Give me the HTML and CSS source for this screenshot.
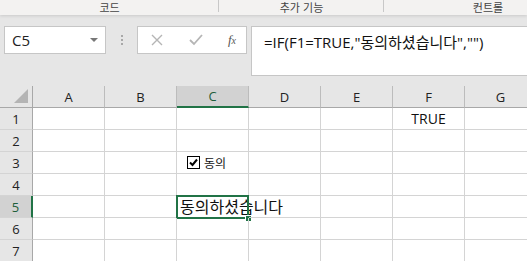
FILE: index.html
```html
<!DOCTYPE html>
<html lang="ko">
<head>
    <meta charset="UTF-8">
    <title>Excel - 동의 체크박스</title>
    <link rel="stylesheet" href="styles.css">
</head>
<body>

<div id="app">
    <!-- Ribbon group labels -->
    <div class="ribbon">
        <div class="ribbon-group g1">코드</div>
        <div class="ribbon-group g2">추가 기능</div>
        <div class="ribbon-group g3">컨트롤</div>
    </div>

    <!-- Formula bar -->
    <div class="formula-bar">
        <div class="name-box">
            <span>C5</span>
            <span class="caret"></span>
        </div>
        <div class="grip"><i></i><i></i><i></i></div>
        <div class="fx-buttons">
            <svg width="14" height="14" viewBox="0 0 14 14"><path d="M2 2 L12 12 M12 2 L2 12" stroke="#b5b5b5" stroke-width="1.4" fill="none"/></svg>
            <svg width="16" height="14" viewBox="0 0 16 14"><path d="M2 7 L6 11 L14 2" stroke="#b5b5b5" stroke-width="1.8" fill="none"/></svg>
            <span class="fx">f<sub>x</sub></span>
        </div>
        <div class="formula-input">=IF(F1=TRUE,"동의하셨습니다","")</div>
    </div>

    <!-- Sheet -->
    <div class="sheet">
        <div class="hd corner"><span class="tri"></span></div>
        <div class="hd col">A</div>
        <div class="hd col">B</div>
        <div class="hd col active">C</div>
        <div class="hd col">D</div>
        <div class="hd col">E</div>
        <div class="hd col">F</div>
        <div class="hd col">G</div>

        <div class="hd row">1</div>
        <div class="cell"></div><div class="cell"></div><div class="cell"></div><div class="cell"></div><div class="cell"></div>
        <div class="cell bool">TRUE</div><div class="cell"></div>

        <div class="hd row">2</div>
        <div class="cell"></div><div class="cell"></div><div class="cell"></div><div class="cell"></div><div class="cell"></div><div class="cell"></div><div class="cell"></div>

        <div class="hd row">3</div>
        <div class="cell"></div><div class="cell"></div>
        <div class="cell">
            <label class="check">
                <span class="box">
                    <svg width="9" height="9" viewBox="0 0 9 9"><path d="M1 4.5 L3.5 7 L8 1.5" stroke="#000" stroke-width="2" fill="none"/></svg>
                </span>
                동의
            </label>
        </div>
        <div class="cell"></div><div class="cell"></div><div class="cell"></div><div class="cell"></div>

        <div class="hd row">4</div>
        <div class="cell"></div><div class="cell"></div><div class="cell"></div><div class="cell"></div><div class="cell"></div><div class="cell"></div><div class="cell"></div>

        <div class="hd row active">5</div>
        <div class="cell"></div><div class="cell"></div>
        <div class="cell selected">
            <span class="text">동의하셨습니다</span>
            <span class="sel"><span class="handle"></span></span>
        </div>
        <div class="cell"></div><div class="cell"></div><div class="cell"></div><div class="cell"></div>

        <div class="hd row">6</div>
        <div class="cell"></div><div class="cell"></div><div class="cell"></div><div class="cell"></div><div class="cell"></div><div class="cell"></div><div class="cell"></div>

        <div class="hd row">7</div>
        <div class="cell"></div><div class="cell"></div><div class="cell"></div><div class="cell"></div><div class="cell"></div><div class="cell"></div><div class="cell"></div>
    </div>
</div>

</body>
</html>
```

FILE: styles.css
```css
body {
    margin: 0;
    background: #ffffff;
    font-family: 'Open Sans', 'Noto Sans CJK KR', sans-serif;
    overflow: hidden;
}

#app {
    width: 527px;
    height: 261px;
    overflow: hidden;
    background: #e6e6e6;
}

/* Ribbon labels */
.ribbon {
    display: flex;
    height: 15px;
    background: #f3f2f1;
    box-shadow: 0 1px 3px rgba(0, 0, 0, 0.12);
    position: relative;
}

.ribbon-group {
    flex: none;
    position: relative;
    font-family: 'Noto Sans CJK KR', sans-serif;
    font-size: 11px;
    line-height: 14px;
    color: #444;
    text-align: center;
}

.ribbon-group::after {
    content: '';
    position: absolute;
    right: 0;
    top: 0;
    height: 12px;
    border-right: 1px solid #c8c8c8;
}

.g1 { width: 219px; }
.g2 { width: 165px; }
.g3 { width: 208px; }
.g3::after { display: none; }

/* Formula bar */
.formula-bar {
    display: flex;
    align-items: flex-start;
    height: 71px;
    padding: 11px 0 0 4px;
    box-sizing: border-box;
}

.name-box {
    width: 102px;
    height: 28px;
    box-sizing: border-box;
    background: #fff;
    border: 1px solid #c6c6c6;
    display: flex;
    align-items: center;
    justify-content: space-between;
    padding: 0 7px 0 7px;
    font-size: 15px;
    color: #222;
}

.caret {
    width: 0;
    height: 0;
    border-left: 4px solid transparent;
    border-right: 4px solid transparent;
    border-top: 4px solid #777;
}

.grip {
    width: 31px;
    height: 28px;
    display: flex;
    flex-direction: column;
    align-items: center;
    justify-content: center;
    gap: 2px;
}

.grip i {
    width: 2px;
    height: 2px;
    background: #a8a8a8;
}

.fx-buttons {
    width: 110px;
    height: 28px;
    box-sizing: border-box;
    background: #fff;
    border: 1px solid #c6c6c6;
    display: flex;
    align-items: center;
    justify-content: space-between;
    padding: 0 10px 0 12px;
}

.fx {
    font-family: 'Liberation Serif', serif;
    font-style: italic;
    font-size: 13px;
    color: #555;
}

.fx sub {
    font-size: 10px;
    vertical-align: baseline;
}

.formula-input {
    flex: 1;
    margin-left: 4px;
    height: 50px;
    box-sizing: border-box;
    background: #fff;
    border: 1px solid #c6c6c6;
    border-right: none;
    padding: 4px 0 0 12px;
    font-size: 15px;
    color: #111;
    white-space: nowrap;
}

/* Sheet grid */
.sheet {
    display: grid;
    grid-template-columns: 33px repeat(7, 72px);
    grid-auto-rows: 22px;
    background: #fff;
}

.hd {
    background: #e6e6e6;
    box-sizing: border-box;
    border-right: 1px solid #bcbcbc;
    border-bottom: 1px solid #bcbcbc;
    font-size: 13px;
    color: #222;
    display: flex;
    align-items: center;
    justify-content: center;
}

.corner {
    border-right: 1px solid #a8a8a8;
    border-bottom: 1px solid #a8a8a8;
    position: relative;
}

.tri {
    position: absolute;
    right: 4px;
    bottom: 4px;
    width: 0;
    height: 0;
    border-left: 14px solid transparent;
    border-bottom: 14px solid #b4b4b4;
}

.col {
    border-bottom-color: #a8a8a8;
}

.row {
    border-right-color: #a8a8a8;
    border-bottom-color: #d4d4d4;
}

.col.active {
    background: #d2d2d2;
    border-bottom: 2px solid #217346;
    color: #1e5e3a;
}

.row.active {
    background: #d2d2d2;
    border-right: 2px solid #217346;
    color: #1e5e3a;
}

.cell {
    box-sizing: border-box;
    border-right: 1px solid #d4d4d4;
    border-bottom: 1px solid #d4d4d4;
    position: relative;
    font-size: 15px;
    color: #111;
    white-space: nowrap;
}

.bool {
    text-align: center;
    font-size: 14px;
    line-height: 21px;
}

.check {
    position: absolute;
    left: 10px;
    top: 4px;
    display: flex;
    align-items: center;
    gap: 4px;
    font-family: 'Noto Sans CJK KR', sans-serif;
    font-size: 12px;
    line-height: 13px;
}

.box {
    width: 13px;
    height: 13px;
    box-sizing: border-box;
    border: 1px solid #000;
    display: flex;
    align-items: center;
    justify-content: center;
}

.selected .text {
    position: absolute;
    left: 3px;
    top: 0;
    font-family: 'Noto Sans CJK KR', sans-serif;
    font-size: 16px;
    line-height: 21px;
}

.sel {
    position: absolute;
    left: -1px;
    top: -1px;
    right: -1px;
    bottom: -2px;
    border: 2px solid #217346;
}

.handle {
    position: absolute;
    right: -5px;
    bottom: -5px;
    width: 5px;
    height: 5px;
    background: #217346;
    border: 1px solid #fff;
}
```
